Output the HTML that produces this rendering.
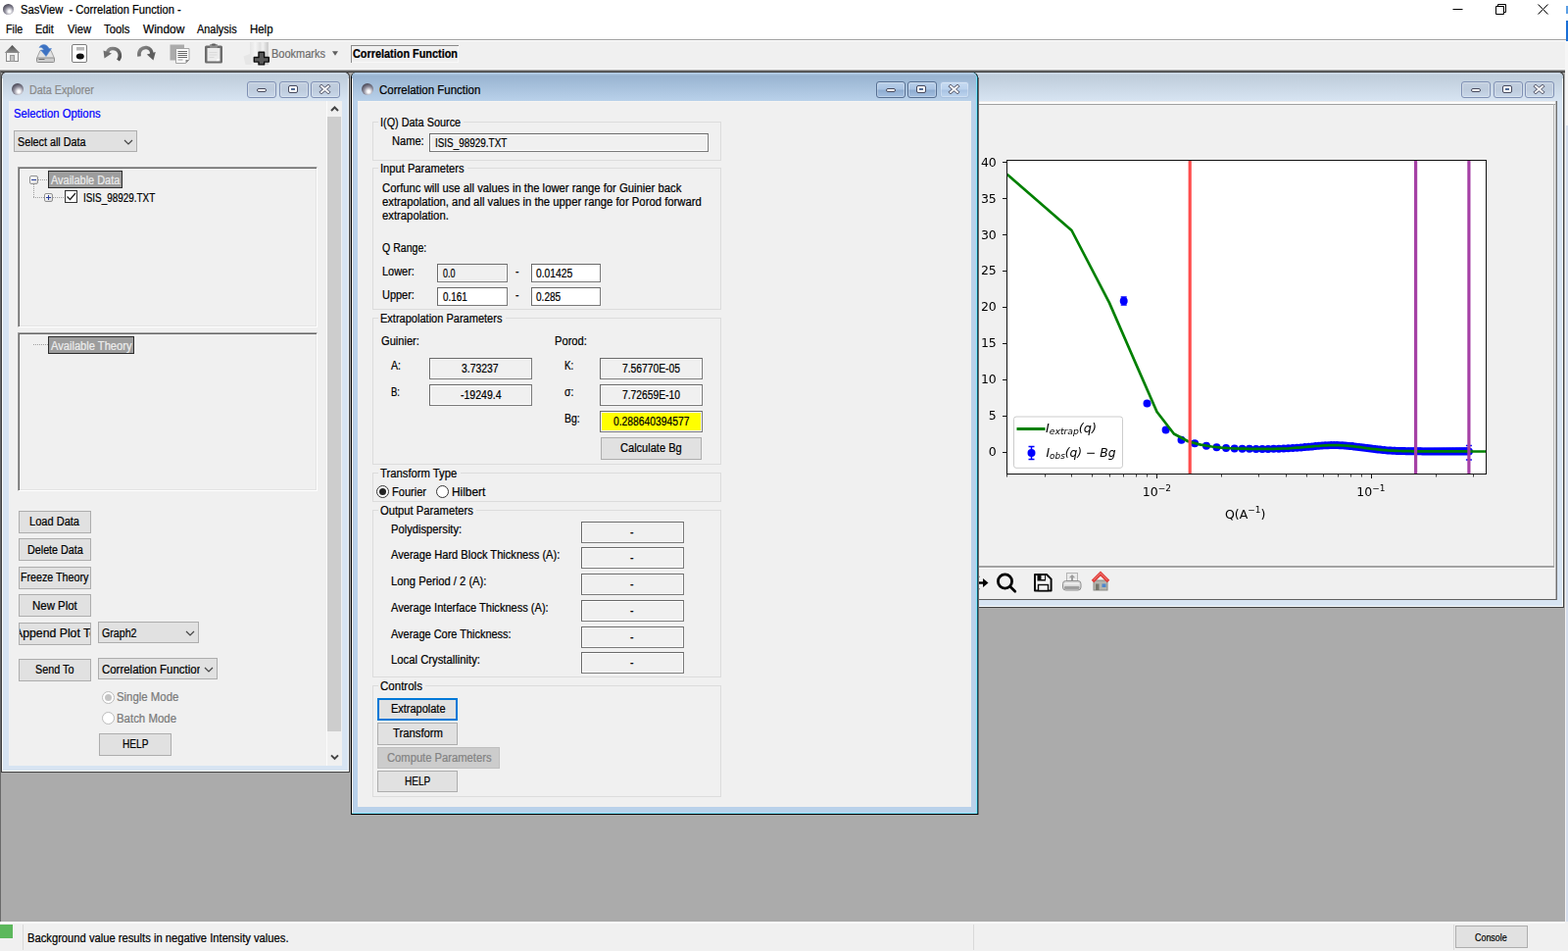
<!DOCTYPE html>
<html lang="en"><head><meta charset="utf-8"><title>SasView - Correlation Function</title>
<style>
html,body{margin:0;padding:0}
body{width:1600px;height:970px;position:relative;overflow:hidden;background:#f0f0f0;font:12px/14px "Liberation Sans",sans-serif;color:#000}
body div,body span.t,body svg{position:absolute;display:block}
.t{white-space:nowrap;transform-origin:0 0;-webkit-text-stroke-width:.22px}
.pre{white-space:pre}
.ball{width:12px;height:12px;border-radius:50%;background:radial-gradient(circle at 60% 70%,#fff 0,#fbfbfd 12%,#8f8d9b 44%,#4c4a58 74%,#403e4a 100%)}
</style></head>
<body>
<div style="left:0px;top:0px;width:1600px;height:40px;background:#fff;"></div>
<div class="ball" style="left:3px;top:4px;width:11px;height:11px"></div>
<span class="t pre" style="left:21.3px;top:3px;transform:scaleX(0.9309);">SasView  - Correlation Function -</span>
<svg style="left:1470px;top:0" width="130" height="20" viewBox="0 0 130 20"><g fill="none" stroke="#000" stroke-width="1"><path d="M12.5 9.5h10"/><path d="M56.5 6.5h8v8h-8zM58.5 6.5v-2h8v8h-2"/><path d="M99.5 4.5l10 10M109.5 4.5l-10 10"/></g></svg>
<span class="t" style="left:5.9px;top:23px;transform:scaleX(0.8892);">File</span>
<span class="t" style="left:36.3px;top:23px;transform:scaleX(0.9039);">Edit</span>
<span class="t" style="left:68.5px;top:23px;transform:scaleX(0.9303);">View</span>
<span class="t" style="left:106px;top:23px;transform:scaleX(0.9388);">Tools</span>
<span class="t" style="left:145.6px;top:23px;transform:scaleX(0.9909);">Window</span>
<span class="t" style="left:201px;top:23px;transform:scaleX(0.9085);">Analysis</span>
<span class="t" style="left:255.3px;top:23px;transform:scaleX(0.9519);">Help</span>
<div style="left:0px;top:40px;width:1600px;height:1px;background:#a0a0a0;"></div>
<div style="left:0px;top:41px;width:1600px;height:31px;background:#f0f0f0;"></div>
<div style="left:0px;top:41px;width:1600px;height:1px;background:#fff;"></div>
<div style="left:0px;top:70px;width:1600px;height:1px;background:#f8f8f8;"></div>
<div style="left:1598px;top:21px;width:2px;height:22px;background:#1a6fd6;"></div>
<div style="left:1598px;top:6px;width:2px;height:8px;background:#5a9ee4;"></div>
<svg style="left:0;top:41px" width="280" height="30" viewBox="0 41 280 30">
<defs>
<linearGradient id="gR" x1="0" y1="0" x2="0" y2="1"><stop offset="0" stop-color="#4c4c4c"/><stop offset="1" stop-color="#8e8e8e"/></linearGradient>
<linearGradient id="gA" x1="0" y1="0" x2="1" y2="1"><stop offset="0" stop-color="#8a8a8a"/><stop offset="1" stop-color="#4e4e4e"/></linearGradient>
<linearGradient id="gB" x1="0" y1="0" x2="1" y2="0"><stop offset="0" stop-color="#e4e4e4"/><stop offset=".3" stop-color="#f4f4f4"/><stop offset=".55" stop-color="#e0e0e0"/><stop offset=".7" stop-color="#f2f2f2"/><stop offset="1" stop-color="#c6c6c6"/></linearGradient>
</defs>
<path d="M12.5 46L20.3 54H4.700z" fill="url(#gR)"/>
<rect x="6.5" y="53.5" width="12" height="9" fill="#f3f3f3" stroke="#8c8c8c"/>
<rect x="10.5" y="56.5" width="4" height="6" fill="#c4c4c4" stroke="#9a9a9a"/>
<path d="M37.5 59.500L41 51.500h11l3.5 8z" fill="#e2e2e2" stroke="#a2a2a2"/>
<rect x="37.5" y="59" width="18" height="4.5" rx="1" fill="#cdcdcd" stroke="#8e8e8e"/>
<path d="M39.5 60.500h6" stroke="#6e6e6e"/>
<path d="M40 48.500C42 44.5 48 44.5 50 49.500L52.5 49.500L47 57.500L41.5 51L44.5 51C44 49 42 48 40 48.500z" fill="#3d72c2" stroke="#5b8bd0" stroke-width=".6"/>
<rect x="73.5" y="45.5" width="15" height="18" rx="1.5" fill="#fff" stroke="#7c7c7c"/>
<rect x="78" y="48" width="8" height="3.5" fill="#b8b8b8"/>
<ellipse cx="81.8" cy="57.5" rx="4" ry="2.9" fill="#101010"/>
<path d="M120.5 61.500C124.5 56 121.5 49.5 115 49.500C112 49.5 110 51.5 109.5 54" fill="none" stroke="url(#gA)" stroke-width="3.6"/>
<path d="M105.5 51.500L114 54.500L106.5 59.500z" fill="#6e6e6e"/>
<path d="M142 57.500C141 51.5 145 48 149.5 48.500C153 49 155 52 155 55.5" fill="none" stroke="url(#gA)" stroke-width="3.6"/>
<path d="M158.8 53L156.5 61.500L149.8 55.500z" fill="#5e5e5e"/>
<rect x="173.5" y="45.5" width="14.5" height="16" fill="#ababab"/>
<path d="M179.5 49.500H193V61L189.5 64.500H179.500z" fill="#fbfbfb" stroke="#a4a4a4"/>
<path d="M181.5 52.500h9.500M181.5 54.500h9.500M181.5 56.500h9.500M181.5 58.500h9.5" stroke="#6a6a6a" fill="none"/>
<path d="M181.5 61h5" stroke="#9a9a9a" fill="none"/>
<path d="M189.5 64.500V61H193z" fill="#8a8a8a"/>
<rect x="209" y="46.5" width="18" height="18" rx="1.5" fill="#6c6c6c"/>
<rect x="211.5" y="49" width="13" height="13.5" fill="#ececec"/>
<path d="M213.5 53.500h8M213.5 56h8M213.5 58.500h5" stroke="#dadada" fill="none"/>
<rect x="214" y="45" width="8" height="4" rx="1" fill="#8e8e8e"/>
<rect x="216" y="44.5" width="4" height="2" rx="1" fill="#5c5c5c"/>
<path d="M221.5 62.500v-2.500h3z" fill="#fff"/>
<path d="M255 43h18.800v23H255z" fill="url(#gB)"/>
<path d="M248.5 57.500L255 55v11l-4.5 0z" fill="#e6e6e6"/>
<path d="M264 53.2h5.6v5.3h4.7v4.6h-4.7v2.8h-5.6v-2.8h-4.7v-4.6h4.7z" fill="#585858" stroke="#0c0c0c" stroke-width="1.4" stroke-linejoin="round"/>
</svg>
<span class="t" style="left:277px;top:48px;color:#6d6d6d;transform:scaleX(0.9162);">Bookmarks</span>
<svg style="left:338px;top:51px" width="8" height="7" viewBox="0 0 8 7"><path d="M1 1.200h6L4 5.800z" fill="#5e5e5e"/></svg>
<div style="left:358px;top:46px;width:110px;height:18px;background:#f0f0f0;box-shadow:inset 1px 1px 0 #8a8a8a,inset -1px -1px 0 #f8f8f8;"></div>
<span class="t" style="left:360px;top:48px;font:bold 12px/14px 'Liberation Sans',sans-serif;transform:scaleX(0.9068);">Correlation Function</span>
<div style="left:0px;top:71px;width:1597px;height:869px;background:#ababab;"></div>
<div style="left:0px;top:71px;width:1597px;height:1px;background:#a8a8a8;"></div>
<div style="left:0px;top:72px;width:1597px;height:1px;background:#6a6a6a;"></div>
<div style="left:0px;top:73px;width:1597px;height:1px;background:#404040;"></div>
<div style="left:0px;top:72px;width:1px;height:868px;background:#6a6a6a;"></div>
<div style="left:1597px;top:42px;width:3px;height:900px;background:#f6f6f6;"></div>
<div style="left:1598px;top:128px;width:2px;height:817px;background:#d3dcec;"></div>
<div style="left:0px;top:940px;width:1600px;height:30px;background:#f0f0f0;"></div>
<div style="left:0px;top:940px;width:1597px;height:2px;background:#fbfbfb;"></div>
<div style="left:0px;top:943px;width:13px;height:14px;background:#5cb85c;"></div>
<div style="left:23px;top:943px;width:1px;height:26px;background:#d9d9d9;"></div>
<div style="left:993px;top:943px;width:1px;height:26px;background:#d9d9d9;"></div>
<div style="left:1483px;top:943px;width:1px;height:26px;background:#d9d9d9;"></div>
<span class="t" style="left:27.5px;top:950px;transform:scaleX(0.9335);">Background value results in negative Intensity values.</span>
<div style="left:1485px;top:944px;width:74px;height:23px;background:#e1e1e1;border:1px solid #adadad;box-sizing:border-box;"></div>
<span class="t" style="left:1505.3px;top:950px;font:11px/13px 'Liberation Sans',sans-serif;transform:scaleX(0.8102);">Console</span>
<div style="left:940px;top:73px;width:656px;height:547px;background:#404040;border-radius:5px 5px 0 0;"></div>
<div style="left:940px;top:74px;width:655px;height:545px;background:#d7e4f2;border-radius:5px 5px 0 0;"></div>
<div style="left:940px;top:74px;width:655px;height:29px;background:linear-gradient(#cfdbe8 0%,#bfcddb 12%,#d7e4f2 100%);border-radius:5px 5px 0 0;"></div>
<div style="left:1594px;top:80px;width:1px;height:539px;background:#f4f8fc;"></div>
<div style="left:940px;top:618px;width:655px;height:1px;background:#fafdff;"></div>
<div style="left:1491px;top:83px;width:30px;height:17px;box-sizing:border-box;border:1px solid #7f90b4;border-radius:3px;background:linear-gradient(#c2cfdf 0%,#bdcbdc 50%,#c8d7e9 100%);box-shadow:inset 0 0 0 1px rgba(255,255,255,.3)"></div>
<div style="left:1501px;top:90px;width:10px;height:4px;box-sizing:border-box;background:#fff;border:1px solid #474a5e;border-radius:2px"></div>
<div style="left:1524px;top:83px;width:30px;height:17px;box-sizing:border-box;border:1px solid #7f90b4;border-radius:3px;background:linear-gradient(#c2cfdf 0%,#bdcbdc 50%,#c8d7e9 100%);box-shadow:inset 0 0 0 1px rgba(255,255,255,.3)"></div>
<div style="left:1534px;top:88px;width:8px;height:6px;box-sizing:border-box;background:#4f6a94;border:2px solid #fff;outline:1px solid #474a5e;border-radius:1px"></div>
<div style="left:1556px;top:83px;width:30px;height:17px;box-sizing:border-box;border:1px solid #7f90b4;border-radius:3px;background:linear-gradient(#c2cfdf 0%,#bdcbdc 50%,#c8d7e9 100%);box-shadow:inset 0 0 0 1px rgba(255,255,255,.3)"></div>
<svg style="left:1564px;top:86px" width="13" height="10" viewBox="0 0 13 10"><path d="M3 2l7 6M10 2l-7 6" stroke="#5a5d70" stroke-width="3.6" stroke-linecap="square" fill="none"/><path d="M3 2l7 6M10 2l-7 6" stroke="#fff" stroke-width="1.9" stroke-linecap="square" fill="none"/></svg>
<div style="left:946px;top:103px;width:643px;height:508px;background:#f0f0f0;"></div>
<div style="left:946px;top:611px;width:643px;height:1px;background:#5f5f5f;"></div>
<div style="left:1588px;top:103px;width:1px;height:509px;background:#6f6f6f;"></div>
<div style="left:1587px;top:103px;width:1px;height:508px;background:#b4b4b4;"></div>
<div style="left:946px;top:103px;width:641px;height:1px;background:#ececec;"></div>
<div style="left:946px;top:104px;width:641px;height:2px;background:#fdfdfd;"></div>
<div style="left:946px;top:106px;width:641px;height:1px;background:#a0a0a0;"></div>
<div style="left:1585px;top:106px;width:1px;height:473px;background:#b8b8b8;"></div>
<div style="left:946px;top:577px;width:640px;height:2px;background:#a2a2a2;"></div>
<div style="left:946px;top:579px;width:641px;height:1px;background:#fff;"></div>
<svg style="left:998px;top:107px;will-change:transform" width="588" height="470" viewBox="998 107 588 470" font-family='"DejaVu Sans","Liberation Sans",sans-serif'><rect x="1027.5" y="163.5" width="489" height="320" fill="#fff"/><clipPath id="ax"><rect x="1027.5" y="163.5" width="489" height="320"/></clipPath><g clip-path="url(#ax)"><path d="M1146.7 303.0V311.0M1143.7 303.0h6M1143.7 311.0h6M1498.9 454.4V468.9M1495.9 454.4h6M1495.9 468.9h6" stroke="#0000ff" stroke-width="1.5" fill="none"/><path d="M1146.7 307.0h0M1170.5 411.5h0M1189.6 438.5h0M1205.5 448.8h0M1219.1 452.3h0M1231.0 454.8h0M1241.5 456.2h0M1251.1 457.0h0M1259.7 457.5h0M1267.6 457.7h0M1274.9 457.8h0M1281.7 457.9h0M1288.1 457.9h0M1294.0 457.9h0M1299.6 457.8h0M1304.9 457.7h0M1309.9 457.5h0M1314.6 457.3h0M1319.2 457.0h0M1323.5 456.7h0M1327.6 456.4h0M1331.6 456.0h0M1335.4 455.7h0M1339.0 455.4h0M1342.5 455.0h0M1345.9 454.8h0M1349.2 454.5h0M1352.4 454.3h0M1355.4 454.2h0M1358.4 454.1h0M1361.3 454.1h0M1364.1 454.1h0M1366.8 454.2h0M1369.4 454.3h0M1372.0 454.5h0M1374.5 454.7h0M1377.0 454.9h0M1379.3 455.1h0M1381.6 455.4h0M1383.9 455.7h0M1386.1 455.9h0M1388.3 456.2h0M1390.4 456.5h0M1392.5 456.8h0M1394.5 457.1h0M1396.5 457.3h0M1398.4 457.6h0M1400.3 457.8h0M1402.2 458.0h0M1404.0 458.2h0M1405.8 458.4h0M1407.5 458.6h0M1409.3 458.8h0M1411.0 459.0h0M1412.6 459.1h0M1414.3 459.2h0M1415.9 459.4h0M1417.5 459.5h0M1419.0 459.6h0M1420.6 459.7h0M1422.1 459.7h0M1423.5 459.8h0M1425.0 459.9h0M1426.4 459.9h0M1427.9 460.0h0M1429.3 460.0h0M1430.6 460.1h0M1432.0 460.1h0M1433.3 460.1h0M1434.7 460.2h0M1436.0 460.2h0M1437.2 460.2h0M1438.5 460.2h0M1439.8 460.2h0M1441.0 460.3h0M1442.2 460.3h0M1443.4 460.3h0M1444.6 460.3h0M1445.8 460.3h0M1446.9 460.3h0M1448.1 460.3h0M1449.2 460.3h0M1450.3 460.3h0M1451.4 460.4h0M1452.5 460.4h0M1453.6 460.4h0M1454.7 460.4h0M1455.7 460.4h0M1456.8 460.4h0M1457.8 460.4h0M1458.8 460.4h0M1459.8 460.4h0M1460.8 460.4h0M1461.8 460.4h0M1462.8 460.4h0M1463.8 460.4h0M1464.7 460.4h0M1465.7 460.4h0M1466.6 460.4h0M1467.6 460.4h0M1468.5 460.4h0M1469.4 460.4h0M1470.3 460.4h0M1471.2 460.4h0M1472.1 460.4h0M1473.0 460.4h0M1473.8 460.4h0M1474.7 460.4h0M1475.6 460.4h0M1476.4 460.4h0M1477.2 460.4h0M1478.1 460.4h0M1478.9 460.4h0M1479.7 460.4h0M1480.5 460.4h0M1481.3 460.4h0M1482.1 460.4h0M1482.9 460.4h0M1483.7 460.4h0M1484.5 460.4h0M1485.3 460.4h0M1486.0 460.4h0M1486.8 460.4h0M1487.6 460.4h0M1488.3 460.4h0M1489.0 460.4h0M1489.8 460.4h0M1490.5 460.4h0M1491.2 460.4h0M1492.0 460.4h0M1492.7 460.4h0M1493.4 460.4h0M1494.1 460.4h0M1494.8 460.4h0M1495.5 460.4h0M1496.2 460.4h0M1496.8 460.4h0M1497.5 460.4h0M1498.2 460.4h0M1498.9 460.4h0" stroke="#0000ff" stroke-width="8" stroke-linecap="round" fill="none"/><polyline points="1027.6,177.8 1093.5,235.0 1132.0,308.9 1159.3,371.6 1180.5,420.0 1197.9,442.5 1212.5,450.3 1225.2,453.6 1236.4,455.5 1246.4,456.6 1259.7,457.5 1267.6,457.7 1274.9,457.8 1281.7,457.9 1288.1,457.9 1294.0,457.9 1299.6,457.8 1304.9,457.7 1309.9,457.5 1314.6,457.3 1319.2,457.0 1323.5,456.7 1327.6,456.4 1331.6,456.0 1335.4,455.7 1339.0,455.4 1342.5,455.0 1345.9,454.8 1349.2,454.5 1352.4,454.3 1355.4,454.2 1358.4,454.1 1361.3,454.1 1364.1,454.1 1366.8,454.2 1369.4,454.3 1372.0,454.5 1374.5,454.7 1377.0,454.9 1379.3,455.1 1381.6,455.4 1383.9,455.7 1386.1,455.9 1388.3,456.2 1390.4,456.5 1392.5,456.8 1394.5,457.1 1396.5,457.3 1398.4,457.6 1400.3,457.8 1402.2,458.0 1404.0,458.2 1405.8,458.4 1407.5,458.6 1409.3,458.8 1411.0,459.0 1412.6,459.1 1414.3,459.2 1415.9,459.4 1417.5,459.5 1419.0,459.6 1420.6,459.7 1422.1,459.7 1423.5,459.8 1425.0,459.9 1426.4,459.9 1427.9,460.0 1429.3,460.0 1430.6,460.1 1432.0,460.1 1433.3,460.1 1434.7,460.2 1436.0,460.2 1437.2,460.2 1438.5,460.2 1439.8,460.2 1441.0,460.3 1442.2,460.3 1443.4,460.3 1444.6,460.3 1445.8,460.3 1446.9,460.3 1448.1,460.3 1449.2,460.3 1450.3,460.3 1451.4,460.4 1452.5,460.4 1453.6,460.4 1454.7,460.4 1455.7,460.4 1456.8,460.4 1457.8,460.4 1458.8,460.4 1459.8,460.4 1460.8,460.4 1461.8,460.4 1462.8,460.4 1463.8,460.4 1464.7,460.4 1465.7,460.4 1466.6,460.4 1467.6,460.4 1468.5,460.4 1469.4,460.4 1470.3,460.4 1471.2,460.4 1472.1,460.4 1473.0,460.4 1473.8,460.4 1474.7,460.4 1475.6,460.4 1476.4,460.4 1477.2,460.4 1478.1,460.4 1478.9,460.4 1479.7,460.4 1480.5,460.4 1481.3,460.4 1482.1,460.4 1482.9,460.4 1483.7,460.4 1484.5,460.4 1485.3,460.4 1486.0,460.4 1486.8,460.4 1487.6,460.4 1488.3,460.4 1489.0,460.4 1489.8,460.4 1490.5,460.4 1491.2,460.4 1492.0,460.4 1492.7,460.4 1493.4,460.4 1494.1,460.4 1494.8,460.4 1495.5,460.4 1496.2,460.4 1496.8,460.4 1497.5,460.4 1498.2,460.4 1503.7,460.5 1518.4,460.5" stroke="#008000" stroke-width="2.7" fill="none" stroke-linejoin="round"/><path d="M1214.2 163.5V483.5" stroke="#ff4d4d" stroke-width="3.2"/><path d="M1444.6 163.5V483.5M1498.9 163.5V483.5" stroke="#a540a5" stroke-width="3.2"/></g><rect x="1034.5" y="425" width="111" height="52.3" rx="2.5" fill="#fff" fill-opacity=".8" stroke="#ccc"/><path d="M1037.5 437.500h29" stroke="#008000" stroke-width="3"/><path d="M1052.5 455.500v13M1049.5 455.500h6M1049.5 468.500h6" stroke="#00f" stroke-width="1.5" fill="none"/><circle cx="1052.5" cy="462" r="4" fill="#00f"/><text x="1067" y="440.7" font-size="12.5" font-style="italic" fill="#000" textLength="52" lengthAdjust="spacingAndGlyphs">I<tspan font-size="9" dy="2.5">extrap</tspan><tspan dy="-2.5">(q)</tspan></text><text x="1067.5" y="465.7" font-size="12.5" font-style="italic" fill="#000" textLength="71" lengthAdjust="spacingAndGlyphs">I<tspan font-size="9" dy="2.5">obs</tspan><tspan dy="-2.5">(q) − Bg</tspan></text><rect x="1027.5" y="163.5" width="489" height="320" fill="none" stroke="#111" stroke-width="1"/><path d="M1027.5 461.5h-4.5M1027.5 424.5h-4.5M1027.5 387.5h-4.5M1027.5 350.5h-4.5M1027.5 313.5h-4.5M1027.5 276.5h-4.5M1027.5 239.5h-4.5M1027.5 202.5h-4.5M1027.5 165.5h-4.5M1180.5 483.5v4.5M1399.5 483.5v4.5" stroke="#111" stroke-width="1" fill="none"/><path d="M1027.5 483.5v3M1066.5 483.5v3M1093.5 483.5v3M1114.5 483.5v3M1132.5 483.5v3M1146.5 483.5v3M1159.5 483.5v3M1170.5 483.5v3M1246.5 483.5v3M1284.5 483.5v3M1312.5 483.5v3M1333.5 483.5v3M1350.5 483.5v3M1365.5 483.5v3M1378.5 483.5v3M1389.5 483.5v3M1465.5 483.5v3M1503.5 483.5v3" stroke="#111" stroke-width="0.8" fill="none"/><text x="1016.8" y="465.1" font-size="12.5" text-anchor="end" fill="#000">0</text><text x="1016.8" y="428.175" font-size="12.5" text-anchor="end" fill="#000">5</text><text x="1016.8" y="391.25" font-size="12.5" text-anchor="end" fill="#000">10</text><text x="1016.8" y="354.325" font-size="12.5" text-anchor="end" fill="#000">15</text><text x="1016.8" y="317.4" font-size="12.5" text-anchor="end" fill="#000">20</text><text x="1016.8" y="280.475" font-size="12.5" text-anchor="end" fill="#000">25</text><text x="1016.8" y="243.55" font-size="12.5" text-anchor="end" fill="#000">30</text><text x="1016.8" y="206.625" font-size="12.5" text-anchor="end" fill="#000">35</text><text x="1016.8" y="169.7" font-size="12.5" text-anchor="end" fill="#000">40</text><text x="1165.8" y="506" font-size="12.5" fill="#000">10<tspan font-size="9" dy="-5.5">−2</tspan></text><text x="1384.3" y="506" font-size="12.5" fill="#000">10<tspan font-size="9" dy="-5.5">−1</tspan></text><text x="1250" y="528.5" font-size="12.5" fill="#000">Q(A<tspan font-size="9" dy="-5.5">−1</tspan><tspan dy="5.5">)</tspan></text></svg>
<svg style="left:998px;top:580px" width="140" height="30" viewBox="998 580 140 30">
<path d="M996 594.500h8" stroke="#000" stroke-width="2.4" fill="none"/>
<path d="M1003 590l5.5 4.5-5.5 4.500z" fill="#000"/>
<path d="M997 585.500l3 3h-4zM997 603.500l3-3h-4z" fill="#000"/>
<circle cx="1025.5" cy="593" r="7.1" fill="none" stroke="#000" stroke-width="2.8"/>
<path d="M1031 598.500l4.8 4.8" stroke="#000" stroke-width="2.7" stroke-linecap="round"/>
<path d="M1056 586H1068l4.6 4.6V602.6h-16.6z" fill="#f4f4f4" stroke="#0a0a0a" stroke-width="2" stroke-linejoin="round"/>
<rect x="1058.5" y="586" width="8.5" height="6.5" fill="#0a0a0a"/>
<rect x="1062.5" y="587" width="3.5" height="4" fill="#f4f4f4"/>
<rect x="1059.5" y="596.5" width="10" height="6" fill="#f4f4f4" stroke="#0a0a0a" stroke-width="1.4"/>
<rect x="1088.5" y="584.5" width="11" height="9.5" fill="#ebebeb" stroke="#b4b4b4"/>
<path d="M1094 586l3.2 3.200h-2.200v3h-2v-3h-2.200z" fill="#9c9c9c"/>
<rect x="1084.5" y="592.5" width="18.5" height="9.5" rx="3" fill="#dcdcdc" stroke="#8e8e8e"/>
<path d="M1086.5 595.500h14.5" stroke="#f6f6f6" fill="none"/>
<rect x="1086" y="598" width="15.5" height="3" rx="1" fill="#9e9e9e"/>
<rect x="1116" y="592" width="14" height="10" fill="#b4b4ae" stroke="#8a8a84"/>
<rect x="1118" y="595.5" width="3.5" height="6.5" fill="#76766c"/>
<rect x="1124.5" y="595.5" width="4" height="3.5" fill="#4f86cc"/>
<path d="M1115 593L1123 585l8 8" stroke="#df3b38" stroke-width="3.6" fill="none" stroke-linejoin="miter"/>
<path d="M1116 591.6L1123 584.6l7 7" stroke="#f2817d" stroke-width="1.2" fill="none" stroke-opacity=".7"/>
</svg>
<div style="left:1px;top:73px;width:356px;height:715px;background:#404040;border-radius:5px 5px 0 0;"></div>
<div style="left:2px;top:74px;width:354px;height:713px;background:#d7e4f2;border-radius:5px 5px 0 0;"></div>
<div style="left:2px;top:74px;width:354px;height:29px;background:linear-gradient(#cfdbe8 0%,#bfcddb 12%,#d7e4f2 100%);border-radius:5px 5px 0 0;"></div>
<div style="left:2px;top:80px;width:1px;height:707px;background:#fafdff;"></div>
<div style="left:355px;top:80px;width:1px;height:707px;background:#f4f8fc;"></div>
<div style="left:2px;top:786px;width:354px;height:1px;background:#fafdff;"></div>
<div class="ball" style="left:12px;top:85px"></div>
<span class="t" style="left:29.7px;top:85px;color:#8a8a8a;transform:scaleX(0.8968);">Data Explorer</span>
<div style="left:252px;top:83px;width:30px;height:17px;box-sizing:border-box;border:1px solid #7f90b4;border-radius:3px;background:linear-gradient(#c2cfdf 0%,#bdcbdc 50%,#c8d7e9 100%);box-shadow:inset 0 0 0 1px rgba(255,255,255,.3)"></div>
<div style="left:262px;top:90px;width:10px;height:4px;box-sizing:border-box;background:#fff;border:1px solid #474a5e;border-radius:2px"></div>
<div style="left:285px;top:83px;width:30px;height:17px;box-sizing:border-box;border:1px solid #7f90b4;border-radius:3px;background:linear-gradient(#c2cfdf 0%,#bdcbdc 50%,#c8d7e9 100%);box-shadow:inset 0 0 0 1px rgba(255,255,255,.3)"></div>
<div style="left:295px;top:88px;width:8px;height:6px;box-sizing:border-box;background:#4f6a94;border:2px solid #fff;outline:1px solid #474a5e;border-radius:1px"></div>
<div style="left:317px;top:83px;width:30px;height:17px;box-sizing:border-box;border:1px solid #7f90b4;border-radius:3px;background:linear-gradient(#c2cfdf 0%,#bdcbdc 50%,#c8d7e9 100%);box-shadow:inset 0 0 0 1px rgba(255,255,255,.3)"></div>
<svg style="left:325px;top:86px" width="13" height="10" viewBox="0 0 13 10"><path d="M3 2l7 6M10 2l-7 6" stroke="#5a5d70" stroke-width="3.6" stroke-linecap="square" fill="none"/><path d="M3 2l7 6M10 2l-7 6" stroke="#fff" stroke-width="1.9" stroke-linecap="square" fill="none"/></svg>
<div style="left:9px;top:103px;width:340px;height:678px;background:#f0f0f0;"></div>
<div style="left:333px;top:103px;width:1px;height:678px;background:#fbfbfb;"></div>
<div style="left:334px;top:103px;width:15px;height:678px;background:#f0f0f0;"></div>
<div style="left:334px;top:119px;width:14px;height:627px;background:#cdcdcd;"></div>
<svg style="left:336px;top:107px" width="11" height="8" viewBox="0 0 11 8"><path d="M2 6l3.5-3.5 3.5 3.5" stroke="#444" stroke-width="2" fill="none"/></svg>
<svg style="left:336px;top:768px" width="11" height="8" viewBox="0 0 11 8"><path d="M2 2.4l3.5 3.5 3.5-3.5" stroke="#444" stroke-width="2" fill="none"/></svg>
<span class="t" style="left:14.4px;top:109px;color:#0000ff;transform:scaleX(0.9419);">Selection Options</span>
<div style="left:14px;top:133px;width:126px;height:22px;box-sizing:border-box;background:#e1e1e1;border:1px solid #adadad"></div>
<span class="t" style="left:18px;top:138px;transform:scaleX(0.8982);">Select all Data</span>
<svg style="left:126px;top:142px" width="10" height="6" viewBox="0 0 10 6"><path d="M1 1l4 4 4-4" stroke="#444" stroke-width="1.2" fill="none"/></svg>
<div style="left:18px;top:170px;width:306px;height:164px;box-sizing:border-box;background:#f0f0f0;border-top:1px solid #a0a0a0;border-left:1px solid #a0a0a0;border-right:1px solid #fff;border-bottom:1px solid #fff;box-shadow:inset 1px 1px 0 #696969,inset -1px -1px 0 #e3e3e3"></div>
<div style="left:18px;top:339px;width:306px;height:162px;box-sizing:border-box;background:#f0f0f0;border-top:1px solid #a0a0a0;border-left:1px solid #a0a0a0;border-right:1px solid #fff;border-bottom:1px solid #fff;box-shadow:inset 1px 1px 0 #696969,inset -1px -1px 0 #e3e3e3"></div>
<div style="left:39px;top:183px;width:11px;height:1px;background:repeating-linear-gradient(90deg,#a0a0a0 0 1px,transparent 1px 2px);"></div>
<div style="left:34px;top:188px;width:1px;height:14px;background:repeating-linear-gradient(180deg,#a0a0a0 0 1px,transparent 1px 2px);"></div>
<div style="left:34px;top:201px;width:11px;height:1px;background:repeating-linear-gradient(90deg,#a0a0a0 0 1px,transparent 1px 2px);"></div>
<div style="left:54px;top:201px;width:13px;height:1px;background:repeating-linear-gradient(90deg,#a0a0a0 0 1px,transparent 1px 2px);"></div>
<div style="left:30px;top:179px;width:9px;height:9px;box-sizing:border-box;border:1px solid #919191;border-radius:2px;background:linear-gradient(135deg,#fff,#d8d8d8)"></div>
<div style="left:32px;top:183px;width:5px;height:1px;background:#2a3f9c;"></div>
<div style="left:45px;top:197px;width:9px;height:9px;box-sizing:border-box;border:1px solid #919191;border-radius:2px;background:linear-gradient(135deg,#fff,#d8d8d8)"></div>
<div style="left:47px;top:201px;width:5px;height:1px;background:#2a3f9c;"></div>
<div style="left:49px;top:199px;width:1px;height:5px;background:#2a3f9c;"></div>
<div style="left:49px;top:174px;width:76px;height:18px;background:#9d9d9d;border:1px solid #2b2b2b;box-sizing:border-box;"></div>
<span class="t" style="left:52px;top:177px;color:#ececec;transform:scaleX(0.9110);">Available Data</span>
<div style="left:66px;top:194px;width:13px;height:13px;background:#fff;border:1px solid #333;box-sizing:border-box;"></div>
<svg style="left:66px;top:194px" width="13" height="13" viewBox="0 0 13 13"><path d="M2.5 6.500l3 3 5.5-6.5" stroke="#222" stroke-width="1.3" fill="none"/></svg>
<span class="t" style="left:84.5px;top:195px;transform:scaleX(0.8251);">ISIS_98929.TXT</span>
<div style="left:34px;top:351px;width:15px;height:1px;background:repeating-linear-gradient(90deg,#a0a0a0 0 1px,transparent 1px 2px);"></div>
<div style="left:49px;top:343px;width:88px;height:18px;background:#9d9d9d;border:1px solid #2b2b2b;box-sizing:border-box;"></div>
<span class="t" style="left:52px;top:346px;color:#ececec;transform:scaleX(0.9275);">Available Theory</span>
<div style="left:19px;top:521px;width:74px;height:23px;box-sizing:border-box;background:#e1e1e1;border:1px solid #adadad;"></div>
<span class="t" style="left:30.3px;top:525px;transform:scaleX(0.9207);">Load Data</span>
<div style="left:19px;top:549px;width:74px;height:23px;box-sizing:border-box;background:#e1e1e1;border:1px solid #adadad;"></div>
<span class="t" style="left:27.5px;top:554px;transform:scaleX(0.8963);">Delete Data</span>
<div style="left:19px;top:578px;width:74px;height:23px;box-sizing:border-box;background:#e1e1e1;border:1px solid #adadad;"></div>
<span class="t" style="left:21px;top:582px;transform:scaleX(0.8906);">Freeze Theory</span>
<div style="left:19px;top:606px;width:74px;height:23px;box-sizing:border-box;background:#e1e1e1;border:1px solid #adadad;"></div>
<span class="t" style="left:33.2px;top:611px;transform:scaleX(0.9535);">New Plot</span>
<div style="left:19px;top:635px;width:74px;height:23px;box-sizing:border-box;background:#e1e1e1;border:1px solid #adadad;"></div>
<div style="left:20px;top:636px;width:72px;height:21px;overflow:hidden">
<span class="t" style="left:-5.5px;top:3px;transform:scaleX(1.0223);">Append Plot To</span>
</div>
<div style="left:100px;top:634px;width:103px;height:22px;box-sizing:border-box;background:#e1e1e1;border:1px solid #adadad"></div>
<span class="t" style="left:104px;top:639px;transform:scaleX(0.8868);">Graph2</span>
<svg style="left:189px;top:643px" width="10" height="6" viewBox="0 0 10 6"><path d="M1 1l4 4 4-4" stroke="#444" stroke-width="1.2" fill="none"/></svg>
<div style="left:19px;top:672px;width:74px;height:23px;box-sizing:border-box;background:#e1e1e1;border:1px solid #adadad;"></div>
<span class="t" style="left:36.3px;top:676px;transform:scaleX(0.9012);">Send To</span>
<div style="left:100px;top:671px;width:122px;height:22px;box-sizing:border-box;background:#e1e1e1;border:1px solid #adadad"></div>
<div style="left:101px;top:672px;width:103px;height:20px;overflow:hidden">
<span class="t" style="left:3px;top:4px;transform:scaleX(0.9532);">Correlation Function</span>
</div>
<svg style="left:208px;top:680px" width="10" height="6" viewBox="0 0 10 6"><path d="M1 1l4 4 4-4" stroke="#444" stroke-width="1.2" fill="none"/></svg>
<div style="left:103.5px;top:704.5px;width:13px;height:13px;box-sizing:border-box;border:1px solid #bcbcbc;border-radius:50%;background:#fff"></div>
<div style="left:106.5px;top:707.5px;width:7px;height:7px;border-radius:50%;background:#c4c4c4"></div>
<span class="t" style="left:119px;top:704px;color:#7a7a7a;transform:scaleX(0.9488);">Single Mode</span>
<div style="left:103.5px;top:726px;width:13px;height:13px;box-sizing:border-box;border:1px solid #bcbcbc;border-radius:50%;background:#fff"></div>
<span class="t" style="left:119px;top:726px;color:#7a7a7a;transform:scaleX(0.9524);">Batch Mode</span>
<div style="left:101px;top:748px;width:74px;height:23px;box-sizing:border-box;background:#e1e1e1;border:1px solid #adadad;"></div>
<span class="t" style="left:124.6px;top:752px;transform:scaleX(0.8419);">HELP</span>
<div style="left:358px;top:74px;width:640px;height:757px;background:#000;border-radius:5px 5px 0 0;"></div>
<div style="left:998px;top:79px;width:1px;height:752px;background:#6f6464;"></div>
<div style="left:997px;top:78px;width:1px;height:752px;background:#0c5064;"></div>
<div style="left:359px;top:74px;width:638px;height:756px;background:#7fe6ff;border-radius:5px 5px 0 0;"></div>
<div style="left:359px;top:74px;width:637px;height:755px;background:#b9d1ea;border-radius:5px 5px 0 0;"></div>
<div style="left:359px;top:74px;width:637px;height:29px;background:linear-gradient(#b9d1ea 0%,#99b4d1 12%,#b9d1ea 100%);border-radius:5px 5px 0 0;"></div>
<div style="left:359px;top:80px;width:1px;height:749px;background:#f4f9ff;"></div>
<div class="ball" style="left:369px;top:85px"></div>
<span class="t" style="left:386.7px;top:85px;transform:scaleX(0.9559);">Correlation Function</span>
<div style="left:894px;top:83px;width:30px;height:17px;box-sizing:border-box;border:1px solid #566f92;border-radius:3px;background:linear-gradient(#b9cfe9 0%,#aac4e3 46%,#8eacd0 54%,#a3bfe0 100%);box-shadow:inset 0 0 0 1px rgba(255,255,255,.3)"></div>
<div style="left:904px;top:90px;width:10px;height:4px;box-sizing:border-box;background:#fff;border:1px solid #474a5e;border-radius:2px"></div>
<div style="left:926px;top:83px;width:30px;height:17px;box-sizing:border-box;border:1px solid #566f92;border-radius:3px;background:linear-gradient(#b9cfe9 0%,#aac4e3 46%,#8eacd0 54%,#a3bfe0 100%);box-shadow:inset 0 0 0 1px rgba(255,255,255,.3)"></div>
<div style="left:936px;top:88px;width:8px;height:6px;box-sizing:border-box;background:#4f6a94;border:2px solid #fff;outline:1px solid #474a5e;border-radius:1px"></div>
<div style="left:959px;top:83px;width:30px;height:17px;box-sizing:border-box;border:1px solid #a9c1de;border-radius:3px;background:linear-gradient(#c6daf1 0%,#bbd2ed 46%,#a9c4e4 54%,#bdd4ee 100%);box-shadow:inset 0 0 0 1px rgba(255,255,255,.3)"></div>
<svg style="left:967px;top:86px" width="13" height="10" viewBox="0 0 13 10"><path d="M3 2l7 6M10 2l-7 6" stroke="#5a5d70" stroke-width="3.6" stroke-linecap="square" fill="none"/><path d="M3 2l7 6M10 2l-7 6" stroke="#fff" stroke-width="1.9" stroke-linecap="square" fill="none"/></svg>
<div style="left:365px;top:103px;width:626px;height:720px;background:#f0f0f0;"></div>
<div style="left:365px;top:103px;width:626px;height:1px;background:#f7f5f2;"></div>
<div style="left:380px;top:124px;width:356px;height:40px;box-sizing:border-box;border:1px solid #dcdcdc"></div>
<div style="left:386.3px;top:124px;width:87.1px;height:1px;background:#f0f0f0;"></div>
<span class="t" style="left:388.3px;top:118px;transform:scaleX(0.9052);">I(Q) Data Source</span>
<span class="t" style="left:399.9px;top:137px;transform:scaleX(0.9252);">Name:</span>
<div style="left:438px;top:136px;width:285px;height:19px;box-sizing:border-box;background:#f0f0f0;border:1px solid #7a7a7a;border-top-color:#6a6a6a;border-left-color:#6a6a6a;box-shadow:inset 0 0 0 1px #fff"></div>
<span class="t" style="left:443.5px;top:139px;transform:scaleX(0.8262);">ISIS_98929.TXT</span>
<div style="left:380px;top:171px;width:356px;height:145px;box-sizing:border-box;border:1px solid #dcdcdc"></div>
<div style="left:386.3px;top:171px;width:90.6px;height:1px;background:#f0f0f0;"></div>
<span class="t" style="left:388.3px;top:165px;transform:scaleX(0.9300);">Input Parameters</span>
<span class="t" style="left:389.7px;top:185px;transform:scaleX(0.9399);">Corfunc will use all values in the lower range for Guinier back</span>
<span class="t" style="left:389.7px;top:199px;transform:scaleX(0.9431);">extrapolation, and all values in the upper range for Porod forward</span>
<span class="t" style="left:389.7px;top:213px;transform:scaleX(0.9411);">extrapolation.</span>
<span class="t" style="left:389.5px;top:246px;transform:scaleX(0.8798);">Q Range:</span>
<span class="t" style="left:389.5px;top:270px;transform:scaleX(0.9131);">Lower:</span>
<div style="left:446px;top:269px;width:72px;height:19px;box-sizing:border-box;background:#f0f0f0;border:1px solid #7a7a7a;border-top-color:#6a6a6a;border-left-color:#6a6a6a;box-shadow:inset 0 0 0 1px #fff"></div>
<span class="t" style="left:452.3px;top:272px;transform:scaleX(0.7491);">0.0</span>
<span class="t" style="left:525.5px;top:270px;transform:scaleX(0.8750);">-</span>
<div style="left:542px;top:269px;width:71px;height:19px;box-sizing:border-box;background:#fff;border:1px solid #7a7a7a;border-top-color:#6a6a6a;border-left-color:#6a6a6a;box-shadow:inset 0 0 0 1px #fff"></div>
<span class="t" style="left:547.3px;top:272px;transform:scaleX(0.8596);">0.01425</span>
<span class="t" style="left:389.5px;top:294px;transform:scaleX(0.9131);">Upper:</span>
<div style="left:446px;top:293px;width:72px;height:19px;box-sizing:border-box;background:#fff;border:1px solid #7a7a7a;border-top-color:#6a6a6a;border-left-color:#6a6a6a;box-shadow:inset 0 0 0 1px #fff"></div>
<span class="t" style="left:452.3px;top:296px;transform:scaleX(0.8225);">0.161</span>
<span class="t" style="left:525.5px;top:294px;transform:scaleX(0.8750);">-</span>
<div style="left:542px;top:293px;width:71px;height:19px;box-sizing:border-box;background:#fff;border:1px solid #7a7a7a;border-top-color:#6a6a6a;border-left-color:#6a6a6a;box-shadow:inset 0 0 0 1px #fff"></div>
<span class="t" style="left:547.3px;top:296px;transform:scaleX(0.8391);">0.285</span>
<div style="left:380px;top:324px;width:356px;height:150px;box-sizing:border-box;border:1px solid #dcdcdc"></div>
<div style="left:386.3px;top:324px;width:129.4px;height:1px;background:#f0f0f0;"></div>
<span class="t" style="left:388.3px;top:318px;transform:scaleX(0.9187);">Extrapolation Parameters</span>
<span class="t" style="left:389.4px;top:341px;transform:scaleX(0.9255);">Guinier:</span>
<span class="t" style="left:566.4px;top:341px;transform:scaleX(0.9304);">Porod:</span>
<span class="t" style="left:399px;top:366px;transform:scaleX(0.8815);">A:</span>
<div style="left:438px;top:365px;width:105px;height:22px;box-sizing:border-box;background:#f0f0f0;border:1px solid #7a7a7a;border-top-color:#6a6a6a;border-left-color:#6a6a6a;box-shadow:inset 0 0 0 1px #fff"></div>
<span class="t" style="left:471px;top:369px;transform:scaleX(0.8642);">3.73237</span>
<span class="t" style="left:399px;top:393px;transform:scaleX(0.7934);">B:</span>
<div style="left:438px;top:392px;width:105px;height:22px;box-sizing:border-box;background:#f0f0f0;border:1px solid #7a7a7a;border-top-color:#6a6a6a;border-left-color:#6a6a6a;box-shadow:inset 0 0 0 1px #fff"></div>
<span class="t" style="left:469.5px;top:396px;transform:scaleX(0.8760);">-19249.4</span>
<span class="t" style="left:576px;top:366px;transform:scaleX(0.8198);">K:</span>
<div style="left:612px;top:365px;width:105px;height:22px;box-sizing:border-box;background:#f0f0f0;border:1px solid #7a7a7a;border-top-color:#6a6a6a;border-left-color:#6a6a6a;box-shadow:inset 0 0 0 1px #fff"></div>
<span class="t" style="left:635px;top:369px;transform:scaleX(0.8584);">7.56770E-05</span>
<span class="t" style="left:576px;top:393px;transform:scaleX(0.8651);">σ:</span>
<div style="left:612px;top:392px;width:105px;height:22px;box-sizing:border-box;background:#f0f0f0;border:1px solid #7a7a7a;border-top-color:#6a6a6a;border-left-color:#6a6a6a;box-shadow:inset 0 0 0 1px #fff"></div>
<span class="t" style="left:635px;top:396px;transform:scaleX(0.8584);">7.72659E-10</span>
<span class="t" style="left:576px;top:420px;transform:scaleX(0.8770);">Bg:</span>
<div style="left:612px;top:419px;width:105px;height:22px;box-sizing:border-box;background:#ffff00;border:1px solid #7a7a7a;border-top-color:#6a6a6a;border-left-color:#6a6a6a;box-shadow:inset 0 0 0 1px #fff"></div>
<span class="t" style="left:625.5px;top:423px;transform:scaleX(0.8602);">0.288640394577</span>
<div style="left:613px;top:446px;width:103px;height:23px;box-sizing:border-box;background:#e1e1e1;border:1px solid #adadad;"></div>
<span class="t" style="left:633.3px;top:450px;transform:scaleX(0.9214);">Calculate Bg</span>
<div style="left:380px;top:482px;width:356px;height:30px;box-sizing:border-box;border:1px solid #dcdcdc"></div>
<div style="left:386.3px;top:482px;width:83.3px;height:1px;background:#f0f0f0;"></div>
<span class="t" style="left:388.3px;top:476px;transform:scaleX(0.9391);">Transform Type</span>
<div style="left:384.3px;top:494.9px;width:13px;height:13px;box-sizing:border-box;border:1px solid #333;border-radius:50%;background:#fff"></div>
<div style="left:387.3px;top:497.9px;width:7px;height:7px;border-radius:50%;background:#222"></div>
<span class="t" style="left:400px;top:495px;transform:scaleX(0.9207);">Fourier</span>
<div style="left:444.8px;top:494.9px;width:13px;height:13px;box-sizing:border-box;border:1px solid #333;border-radius:50%;background:#fff"></div>
<span class="t" style="left:460.7px;top:495px;transform:scaleX(0.9888);">Hilbert</span>
<div style="left:380px;top:520px;width:356px;height:171px;box-sizing:border-box;border:1px solid #dcdcdc"></div>
<div style="left:386.3px;top:520px;width:99.9px;height:1px;background:#f0f0f0;"></div>
<span class="t" style="left:388.3px;top:514px;transform:scaleX(0.9360);">Output Parameters</span>
<span class="t" style="left:399px;top:533px;transform:scaleX(0.9331);">Polydispersity:</span>
<div style="left:593px;top:532px;width:105px;height:22px;box-sizing:border-box;background:#f0f0f0;border:1px solid #7a7a7a;border-top-color:#6a6a6a;border-left-color:#6a6a6a;box-shadow:inset 0 0 0 1px #fff"></div>
<span class="t" style="left:643px;top:536px;transform:scaleX(0.8750);">-</span>
<span class="t" style="left:399px;top:559px;transform:scaleX(0.9248);">Average Hard Block Thickness (A):</span>
<div style="left:593px;top:558px;width:105px;height:22px;box-sizing:border-box;background:#f0f0f0;border:1px solid #7a7a7a;border-top-color:#6a6a6a;border-left-color:#6a6a6a;box-shadow:inset 0 0 0 1px #fff"></div>
<span class="t" style="left:643px;top:562px;transform:scaleX(0.8750);">-</span>
<span class="t" style="left:399px;top:586px;transform:scaleX(0.9369);">Long Period / 2 (A):</span>
<div style="left:593px;top:585px;width:105px;height:22px;box-sizing:border-box;background:#f0f0f0;border:1px solid #7a7a7a;border-top-color:#6a6a6a;border-left-color:#6a6a6a;box-shadow:inset 0 0 0 1px #fff"></div>
<span class="t" style="left:643px;top:589px;transform:scaleX(0.8750);">-</span>
<span class="t" style="left:399px;top:613px;transform:scaleX(0.9219);">Average Interface Thickness (A):</span>
<div style="left:593px;top:612px;width:105px;height:22px;box-sizing:border-box;background:#f0f0f0;border:1px solid #7a7a7a;border-top-color:#6a6a6a;border-left-color:#6a6a6a;box-shadow:inset 0 0 0 1px #fff"></div>
<span class="t" style="left:643px;top:616px;transform:scaleX(0.8750);">-</span>
<span class="t" style="left:399px;top:640px;transform:scaleX(0.9129);">Average Core Thickness:</span>
<div style="left:593px;top:639px;width:105px;height:22px;box-sizing:border-box;background:#f0f0f0;border:1px solid #7a7a7a;border-top-color:#6a6a6a;border-left-color:#6a6a6a;box-shadow:inset 0 0 0 1px #fff"></div>
<span class="t" style="left:643px;top:643px;transform:scaleX(0.8750);">-</span>
<span class="t" style="left:399px;top:666px;transform:scaleX(0.9410);">Local Crystallinity:</span>
<div style="left:593px;top:665px;width:105px;height:22px;box-sizing:border-box;background:#f0f0f0;border:1px solid #7a7a7a;border-top-color:#6a6a6a;border-left-color:#6a6a6a;box-shadow:inset 0 0 0 1px #fff"></div>
<span class="t" style="left:643px;top:669px;transform:scaleX(0.8750);">-</span>
<div style="left:380px;top:699px;width:356px;height:114px;box-sizing:border-box;border:1px solid #dcdcdc"></div>
<div style="left:386.4px;top:699px;width:47.9px;height:1px;background:#f0f0f0;"></div>
<span class="t" style="left:388.4px;top:693px;transform:scaleX(0.9600);">Controls</span>
<div style="left:385px;top:712px;width:82px;height:23px;box-sizing:border-box;background:#e1e1e1;border:1px solid #0078d7;box-shadow:inset 0 0 0 1px #0078d7;"></div>
<span class="t" style="left:399px;top:716px;transform:scaleX(0.9143);">Extrapolate</span>
<div style="left:385px;top:737px;width:82px;height:23px;box-sizing:border-box;background:#e1e1e1;border:1px solid #adadad;"></div>
<span class="t" style="left:401px;top:741px;transform:scaleX(0.9404);">Transform</span>
<div style="left:385px;top:762px;width:125px;height:22px;box-sizing:border-box;background:#cccccc;border:1px solid #bfbfbf;"></div>
<span class="t" style="left:394.5px;top:766px;color:#838383;transform:scaleX(0.9338);">Compute Parameters</span>
<div style="left:385px;top:786px;width:82px;height:22px;box-sizing:border-box;background:#e1e1e1;border:1px solid #adadad;"></div>
<span class="t" style="left:413.3px;top:790px;transform:scaleX(0.8355);">HELP</span>
</body></html>
